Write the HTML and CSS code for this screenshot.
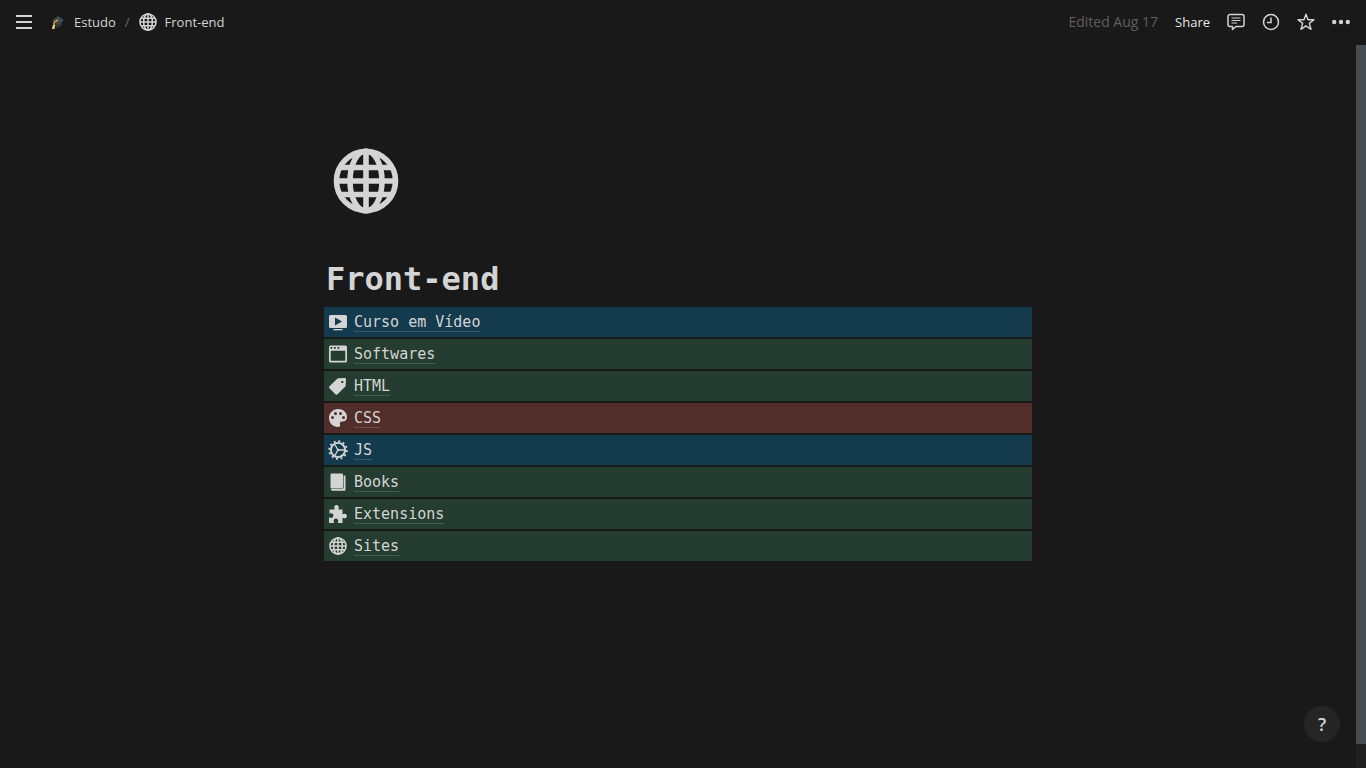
FILE: index.html
```html
<!DOCTYPE html>
<html lang="en">
<head>
<meta charset="utf-8">
<title>Front-end</title>
<link rel="stylesheet" href="styles.css">
</head>
<body>
<svg class="sprite" aria-hidden="true">
  <symbol id="globe" viewBox="0 0 66 66">
    <g fill="none" stroke="currentColor" stroke-width="5.6">
      <circle cx="33" cy="33" r="29.5"/>
      <ellipse cx="33" cy="33" rx="16" ry="30"/>
      <path d="M33 3v60M4 33h58M8 19.5h50M8 46.5h50"/>
    </g>
  </symbol>
</svg>
<header class="topbar">
  <nav class="crumbs" aria-label="Breadcrumb">
    <button class="icon-button menu" aria-label="Open sidebar">
      <svg width="16" height="14" viewBox="0 0 16 14"><path d="M0 1h16M0 7h16M0 13h16" stroke="currentColor" stroke-width="2"/></svg>
    </button>
    <a class="crumb" href="#estudo">
      <svg class="crumb-icon cap" viewBox="0 0 16 16"><path d="M4 8v4l4 2 4-3V7z" fill="#31373d"/><path d="M2 6.500 8 2l6 4-6 5z" fill="#414a50"/><path d="M8 6 4 8.500V12" fill="none" stroke="#ffac33" stroke-width="1.300"/><path d="M3 11h2l-.5 4H2z" fill="#ffd983"/></svg>
      <span>Estudo</span>
    </a>
    <span class="slash">/</span>
    <a class="crumb" href="#front-end" aria-current="page">
      <svg class="crumb-icon globe-small"><use href="#globe"/></svg>
      <span>Front-end</span>
    </a>
  </nav>
  <div class="actions">
    <span class="edited">Edited Aug 17</span>
    <button class="share">Share</button>
    <button class="icon-button" aria-label="Comments">
      <svg width="18" height="18" viewBox="0 0 18 18" fill="none" stroke="currentColor" stroke-width="1.500" stroke-linejoin="round"><path d="M3 1.500h12a2 2 0 0 1 2 2v8a2 2 0 0 1-2 2H9l-3.500 3v-3H3a2 2 0 0 1-2-2v-8a2 2 0 0 1 2-2z"/><path d="M4.500 5h9M4.500 7.500h9M4.500 10H10" stroke-width="1.100"/></svg>
    </button>
    <button class="icon-button" aria-label="Updates">
      <svg width="18" height="18" viewBox="0 0 18 18" fill="none" stroke="currentColor" stroke-width="1.500"><circle cx="9" cy="9" r="7.500"/><path d="M9 4.500V9.500H5"/></svg>
    </button>
    <button class="icon-button" aria-label="Favorite">
      <svg width="18" height="18" viewBox="0 0 18 18" fill="none" stroke="currentColor" stroke-width="1.400" stroke-linejoin="round"><path d="M9 1.200l2 5.600h6l-4.700 3.600 1.700 5.900L9 12.900l-5 3.400 1.700-5.900L1 6.800h6z"/></svg>
    </button>
    <button class="icon-button" aria-label="More">
      <svg width="18" height="18" viewBox="0 0 18 18" fill="currentColor"><circle cx="2.200" cy="9" r="2.200"/><circle cx="9" cy="9" r="2.200"/><circle cx="15.800" cy="9" r="2.200"/></svg>
    </button>
  </div>
</header>
<div class="frame">
  <main class="page">
    <svg class="page-icon"><use href="#globe"/></svg>
    <h1 class="title">Front-end</h1>
    <ul class="links">
      <li class="row blue"><a href="#curso"><svg class="row-icon" viewBox="0 0 20 20" fill="currentColor"><path fill-rule="evenodd" d="M2.500 3h15A1.500 1.500 0 0 1 19 4.500v10a1.500 1.500 0 0 1-1.500 1.500h-15A1.500 1.500 0 0 1 1 14.500v-10A1.500 1.500 0 0 1 2.500 3zM7 5.500v8l7-4z"/><path d="M5.500 17h9v1.300h-9z"/></svg><span class="name">Curso em Vídeo</span></a></li>
      <li class="row green"><a href="#softwares"><svg class="row-icon" viewBox="0 0 20 20" fill="currentColor"><path fill-rule="evenodd" d="M2.500 1.500h15A1.500 1.500 0 0 1 19 3v14a1.500 1.500 0 0 1-1.500 1.500h-15A1.500 1.500 0 0 1 1 17V3a1.500 1.500 0 0 1 1.500-1.500zM2.700 6.800v10h14.600v-10zM2.500 3v1.800h1.800V3zM6 3v1.800h1.800V3zM9.500 3v1.800h1.800V3z"/></svg><span class="name">Softwares</span></a></li>
      <li class="row green"><a href="#html"><svg class="row-icon" viewBox="0 0 20 20" fill="currentColor"><path fill-rule="evenodd" d="M10.500 2.300 17 2a1 1 0 0 1 1 1l-.3 6.500a2 2 0 0 1-.6 1.200l-7.600 7.500a1.500 1.500 0 0 1-2.100 0l-5.900-5.900a1.500 1.500 0 0 1 0-2.100l7.700-7.400a2 2 0 0 1 1.300-.5zM13.300 5v2h2V5z"/></svg><span class="name">HTML</span></a></li>
      <li class="row red"><a href="#css"><svg class="row-icon" viewBox="0 0 20 20" fill="currentColor"><path fill-rule="evenodd" d="M10 1c5 0 9 3.500 9 8 0 3-2 4.500-4.500 4.500-2 0-3 .8-2.500 2.500.5 1.600 0 3-2 3-5 0-9-4-9-9s4-9 9-9zM7.500 4a1.500 1.500 0 1 0 0 3 1.500 1.500 0 0 0 0-3zM12.500 4a1.500 1.500 0 1 0 0 3 1.500 1.500 0 0 0 0-3zM4.500 8a1.500 1.500 0 1 0 0 3 1.500 1.500 0 0 0 0-3zM15.500 8a1.500 1.500 0 1 0 0 3 1.500 1.500 0 0 0 0-3z"/></svg><span class="name">CSS</span></a></li>
      <li class="row blue"><a href="#js"><svg class="row-icon" viewBox="0 0 20 20" fill="none" stroke="currentColor"><circle cx="10" cy="10" r="8.800" stroke-width="1.800" stroke-dasharray="2 2.607"/><circle cx="10" cy="10" r="7.100" stroke-width="1.900"/><path d="M10 10h6.500M10 10 6.800 4.500M10 10l-3.200 5.500" stroke-width="1.400"/><circle cx="10" cy="10" r="1.300" fill="currentColor" stroke="none"/></svg><span class="name">JS</span></a></li>
      <li class="row green"><a href="#books"><svg class="row-icon" viewBox="0 0 20 20" fill="currentColor"><path d="M3.500 1.500H14a1 1 0 0 1 1 1V15a1 1 0 0 1-1 1H3.500a1 1 0 0 0-1 .5V2.500a1 1 0 0 1 1-1z"/><path d="M15.600 3.500h.9a1 1 0 0 1 1 1V18a.7.7 0 0 1-.7.700H4.500a1.500 1.500 0 0 1-1.500-1.500.7.700 0 0 1 .7-.7H14.600a1 1 0 0 0 1-1z"/></svg><span class="name">Books</span></a></li>
      <li class="row green"><a href="#extensions"><svg class="row-icon" viewBox="0 0 20 20" fill="currentColor"><path d="M1.500 5.500h4.700c.6 0 .6-.5.300-1a2.300 2.300 0 1 1 4 0c-.3.500-.3 1 .3 1h3.700v4.200c0 .6.500.7 1 .4a2.300 2.300 0 1 1 0 4c-.5-.3-1-.2-1 .4V19h-4.200c-.6 0-.7-.5-.4-1a2.300 2.300 0 1 0-4 0c.3.500.2 1-.4 1H1v-5c0-.6.500-.7 1-.4a2.300 2.300 0 1 0 0-4c-.3.200-.5 0-.5-.4z"/></svg><span class="name">Extensions</span></a></li>
      <li class="row green"><a href="#sites"><svg class="row-icon" viewBox="0 0 20 20"><use href="#globe" x="1" y="1" width="18" height="18"/></svg><span class="name">Sites</span></a></li>
    </ul>
  </main>
  <div class="scroll-track"><div class="scroll-thumb"></div></div>
</div>
<button class="help" aria-label="Help">?</button>
</body>
</html>
```
FILE: styles.css
```css
* { box-sizing: border-box; }

body {
  display: flex;
  flex-direction: column;
  min-height: 100vh;
  margin: 0;
  background: #191919;
  color: #d4d4d4;
  font: 13px/20px "Open Sans", "Noto Sans", sans-serif;
}

button {
  padding: 0;
  border: 0;
  background: none;
  color: inherit;
  font: inherit;
  cursor: pointer;
}

a { color: inherit; text-decoration: none; }
svg { display: block; flex: none; }
.sprite { position: absolute; width: 0; height: 0; }

.topbar {
  display: flex;
  align-items: center;
  justify-content: space-between;
  height: 45px;
  padding: 0 16px 1px;
}

.crumbs, .crumb, .actions { display: flex; align-items: center; }
.menu { margin-right: 18px; }
.crumb { gap: 8px; }
.crumb-icon { width: 16px; height: 16px; }
.globe-small { width: 18px; height: 18px; }
.slash { margin: 0 9px; color: #6b6b6b; }
.actions { gap: 17px; }
.edited { color: #5f5f5f; font-size: 14px; }
.share { color: #e6e6e6; }

.frame { display: flex; flex: 1; }

.page {
  flex: 1;
  max-width: 708px;
  margin: 0 auto;
  padding-top: 103px;
  font-family: "DejaVu Sans Mono", monospace;
}

.page-icon { width: 66px; height: 66px; margin-left: 9px; }
.title { margin: 45px 0 8px 2px; font-size: 32px; line-height: 40px; }

.links {
  display: grid;
  gap: 2px;
  margin: 0;
  padding: 0;
  list-style: none;
  font-size: 15px;
  line-height: 18px;
}

.row a { display: flex; align-items: center; gap: 6px; height: 30px; padding-left: 4px; }
.row-icon { width: 20px; height: 20px; }
.name { border-bottom: 1px solid rgba(255, 255, 255, 0.16); }
.blue { background: #143a4e; }
.green { background: #243d30; }
.red { background: #522e2a; }

.scroll-track { width: 10px; padding-bottom: 24px; background: #202020; }
.scroll-thumb { height: 100%; background: #474c50; }

.help {
  position: fixed;
  right: 26px;
  bottom: 26px;
  width: 36px;
  height: 36px;
  border-radius: 50%;
  background: #252525;
  font-size: 18px;
  font-weight: 600;
}
```
